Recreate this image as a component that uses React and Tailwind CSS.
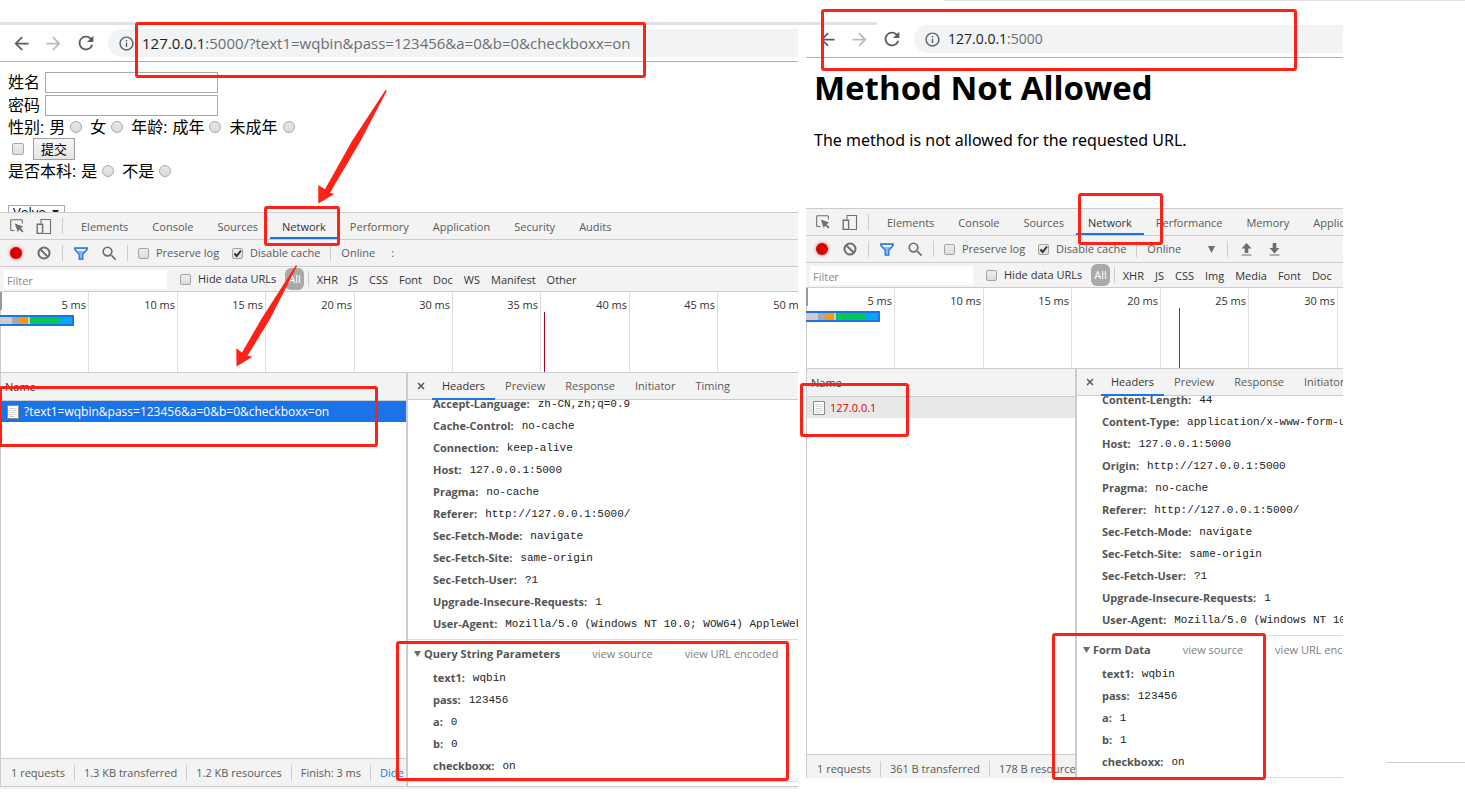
import { MdArrowBack, MdArrowForward, MdRefresh, MdInfoOutline, MdSearch } from "react-icons/md";

const LEFT = {
  host: "127.0.0.1",
  path: ":5000/?text1=wqbin&pass=123456&a=0&b=0&checkboxx=on",
  tabs: ["Elements", "Console", "Sources", "Network", "Performory", "Application", "Security", "Audits"],
  types: ["XHR", "JS", "CSS", "Font", "Doc", "WS", "Manifest", "Other"],
  ticks: [
    ["5 ms", "w-[89px]"],
    ["10 ms", "w-[89px]"],
    ["15 ms", "w-[88px]"],
    ["20 ms", "w-[89px]"],
    ["30 ms", "w-[98px]"],
    ["35 ms", "w-[88px]"],
    ["40 ms", "w-[89px]"],
    ["45 ms", "w-[88px]"],
    ["50 ms", "w-[89px]"],
  ],
  marker: "left-[544px] bg-[#b00020]",
  listWidth: "w-[408px]",
  request: "?text1=wqbin&pass=123456&a=0&b=0&checkboxx=on",
  detailTabs: ["Headers", "Preview", "Response", "Initiator", "Timing"],
  headers: [
    ["Accept-Language", "zh-CN,zh;q=0.9"],
    ["Cache-Control", "no-cache"],
    ["Connection", "keep-alive"],
    ["Host", "127.0.0.1:5000"],
    ["Pragma", "no-cache"],
    ["Referer", "http://127.0.0.1:5000/"],
    ["Sec-Fetch-Mode", "navigate"],
    ["Sec-Fetch-Site", "same-origin"],
    ["Sec-Fetch-User", "?1"],
    ["Upgrade-Insecure-Requests", "1"],
    ["User-Agent", "Mozilla/5.0 (Windows NT 10.0; WOW64) AppleWebKit/537.36"],
  ],
  section: "Query String Parameters",
  params: [
    ["text1", "wqbin"],
    ["pass", "123456"],
    ["a", "0"],
    ["b", "0"],
    ["checkboxx", "on"],
  ],
  status: ["1 requests", "1.3 KB transferred", "1.2 KB resources", "Finish: 3 ms"],
};

const RIGHT = {
  host: "127.0.0.1",
  path: ":5000",
  tabs: ["Elements", "Console", "Sources", "Network", "Performance", "Memory", "Application"],
  types: ["XHR", "JS", "CSS", "Img", "Media", "Font", "Doc"],
  ticks: [
    ["5 ms", "w-[89px]"],
    ["10 ms", "w-[89px]"],
    ["15 ms", "w-[88px]"],
    ["20 ms", "w-[89px]"],
    ["25 ms", "w-[88px]"],
    ["30 ms", "w-[89px]"],
  ],
  marker: "left-[373px] bg-[#0b5cad]",
  listWidth: "w-[271px]",
  request: "127.0.0.1",
  failed: true,
  detailTabs: ["Headers", "Preview", "Response", "Initiator"],
  headers: [
    ["Content-Length", "44"],
    ["Content-Type", "application/x-www-form-urlencoded"],
    ["Host", "127.0.0.1:5000"],
    ["Origin", "http://127.0.0.1:5000"],
    ["Pragma", "no-cache"],
    ["Referer", "http://127.0.0.1:5000/"],
    ["Sec-Fetch-Mode", "navigate"],
    ["Sec-Fetch-Site", "same-origin"],
    ["Sec-Fetch-User", "?1"],
    ["Upgrade-Insecure-Requests", "1"],
    ["User-Agent", "Mozilla/5.0 (Windows NT 10.0; WOW64)"],
  ],
  section: "Form Data",
  params: [
    ["text1", "wqbin"],
    ["pass", "123456"],
    ["a", "1"],
    ["b", "1"],
    ["checkboxx", "on"],
  ],
  status: ["1 requests", "361 B transferred", "178 B resources"],
};

const HIGHLIGHTS = [
  "left-[135px] top-[22px] w-[511px] h-[56px]",
  "left-[821px] top-[9px] w-[476px] h-[62px]",
  "left-[264px] top-[206px] w-[76px] h-[40px]",
  "left-[1078px] top-[193px] w-[85px] h-[52px]",
  "left-[-1px] top-[386px] w-[379px] h-[61px]",
  "left-[800px] top-[383px] w-[109px] h-[54px]",
  "left-[396px] top-[641px] w-[393px] h-[140px]",
  "left-[1052px] top-[633px] w-[214px] h-[147px]",
];

const Separator = ({ className = "" }) => <div className={`h-4 w-px shrink-0 bg-[#ccc] ${className}`} />;

const Tick = ({ id, label, checked, className = "" }) => (
  <span className={`flex shrink-0 items-center gap-[7px] ${className}`}>
    <span className="relative flex">
      <input
        id={id}
        type="checkbox"
        defaultChecked={checked}
        className="size-[11px] appearance-none rounded-[2px] border border-[#a3a3a3] bg-linear-to-b from-[#eee] to-[#dcdcdc]"
      />
      {checked && (
        <svg viewBox="0 0 11 11" className="pointer-events-none absolute inset-0 size-[11px]">
          <path d="M2.5 5.5 4.7 8 9 2.5" fill="none" stroke="#333" strokeWidth="2" />
        </svg>
      )}
    </span>
    <label htmlFor={id}>{label}</label>
  </span>
);

const AddressBar = ({ host, path, textSize }) => (
  <div className="flex h-[37px] items-center border-b border-[#b0b0b0] pl-[11px] text-[#5a5d61]">
    <button aria-label="Back" className="w-8"><MdArrowBack size={21} /></button>
    <button aria-label="Forward" className="w-8 text-[#b9babc]"><MdArrowForward size={21} /></button>
    <button aria-label="Reload" className="w-[33px]"><MdRefresh size={22} /></button>
    <div className={`flex h-7 min-w-0 flex-1 items-center gap-[7px] rounded-l-full bg-[#f1f3f4] pl-[10px] ${textSize}`}>
      <MdInfoOutline size={17} className="shrink-0" />
      <span className="whitespace-nowrap text-[#6b6e72]">
        <span className="text-[#202124]">{host}</span>
        {path}
      </span>
    </div>
  </div>
);

const InspectIcon = () => (
  <svg viewBox="0 0 14 14" className="size-[14px] shrink-0" fill="none">
    <path d="M4.5 11.5h-3a.8.8 0 0 1-.8-.8V1.500c0-.5.3-.8.8-.8h10c.5 0 .8.3.8.8v3" stroke="#6e6e6e" strokeWidth="1.1" />
    <path d="M4.8 4.500 13.200 7.600 10.600 9.200 13.600 12.200 12.200 13.600 9.200 10.600 7.800 13.200z" fill="#6e6e6e" />
  </svg>
);

const DeviceIcon = () => (
  <svg viewBox="0 0 16 17" className="h-[17px] w-4 shrink-0" fill="none" stroke="#6e6e6e">
    <path d="M5 5.500V1.500h9.500v14H7.500" strokeWidth="1.1" />
    <path d="M1.200 6.200h5.400v9.200H1.200z" strokeWidth="1.4" />
  </svg>
);

const ClearIcon = () => (
  <svg viewBox="0 0 14 14" className="mx-px size-[14px] shrink-0" fill="none" stroke="#6e6e6e" strokeWidth="2">
    <circle cx="7" cy="7" r="5.5" />
    <path d="M3.200 3.200l7.600 7.600" />
  </svg>
);

const FunnelIcon = () => (
  <svg viewBox="0 0 14 13" className="h-[13px] w-[14px] shrink-0">
    <path d="M.8 1h12.4v1.500L8.800 7.200v5H5.200v-5L.8 2.500z" fill="#8ab4f8" stroke="#1a73e8" strokeWidth="1.3" />
    <path d="M2 2h10L10.500 4h-7z" fill="#f3f3f3" />
  </svg>
);

const LoadIcon = ({ down }) => (
  <svg viewBox="0 0 11 13" className="h-[13px] w-[11px] shrink-0" fill="#6e6e6e">
    {down ? <path d="M3.700 0h3.600v5h3.200l-5 5.500-5-5.500h3.200z" /> : <path d="M5.500 0l5 5.500H7.300v4.500H3.700V5.500H.5z" />}
    <path d="M.5 11.500h10v1H.5z" />
  </svg>
);

const FileIcon = () => (
  <svg viewBox="0 0 12 14" className="h-[14px] w-3 shrink-0">
    <path d="M.5.5h11v13H.5z" fill="#fff" stroke="#8a8a8a" />
    <path d="M2.500 3.500h4m1 0h2M2.500 5.500h2m1 0h4M2.500 7.500h5m1 0h1M2.500 9.500h3m1 0h3M2.500 11.500h5" stroke="#ccc" />
  </svg>
);

const Timeline = ({ ticks, marker }) => (
  <div className="relative flex h-20 overflow-hidden bg-white text-[#333]">
    {ticks.map(([label, width]) => (
      <div key={label} className={`shrink-0 border-r border-[#e0e0e0] pr-[2px] pt-[5px] text-right ${width}`}>
        {label}
      </div>
    ))}
    <div className="absolute left-0 top-0 h-[18px] w-[2px] bg-[#999]" />
    <div className="absolute left-0 top-[18px] h-[62px] w-px bg-[#ccc]" />
    <div className="absolute left-0 top-[23px] flex h-[11px] w-[74px] border-y-2 border-r-2 border-[#1a73e8]">
      <span className="w-[12px] bg-[#ccc]" />
      <span className="w-[7px] bg-[#a8a8a8]" />
      <span className="w-[9px] bg-[#ff9800]" />
      <span className="w-[2px] bg-[#ccc]" />
      <span className="w-[29px] bg-[#00c853]" />
      <span className="flex-1 bg-[#03a9f4]" />
    </div>
    <div className={`absolute top-5 h-[60px] w-px ${marker}`} />
  </div>
);

const Pairs = ({ rows }) => (
  <dl className="pl-[25px]">
    {rows.map(([name, value]) => (
      <div key={name} className="flex h-[22px] items-center gap-2 whitespace-nowrap">
        <dt className="font-bold text-[#545454]">{name}:</dt>
        <dd className="font-['Liberation_Mono',monospace] text-[#222]">{value}</dd>
      </div>
    ))}
  </dl>
);

const DevTools = ({ data, id, toolbarEnd, statusEnd, statusHeight }) => (
  <section className="border-t border-[#ccc] bg-[#f3f3f3] text-[11px] leading-4 text-[#5a5a5a]">
    <div className="flex h-[27px] items-center overflow-hidden border-b border-[#ccc] pl-[10px]">
      <InspectIcon />
      <span className="ml-[12px] flex"><DeviceIcon /></span>
      <Separator className="ml-[10px] mr-[6px]" />
      {data.tabs.map((tab) => (
        <button
          key={tab}
          className={`h-[26px] shrink-0 px-3 ${tab === "Network" ? "border-b-2 border-[#1a73e8] pt-1 text-[#333]" : "pt-[2px]"}`}
        >
          {tab}
        </button>
      ))}
    </div>

    <div className="flex h-[27px] items-center overflow-hidden border-b border-[#ccc] pl-[10px]">
      <button aria-label="Record" className="size-3 shrink-0 rounded-full bg-[#d80000] shadow-[0_0_3px_1px_#f5a3a3]" />
      <button aria-label="Clear" className="ml-[14px]"><ClearIcon /></button>
      <Separator className="ml-[10px] mr-[11px]" />
      <button aria-label="Filter"><FunnelIcon /></button>
      <button aria-label="Search" className="ml-[12px] text-[#6e6e6e]"><MdSearch size={19} /></button>
      <Separator className="ml-[8px] mr-[10px]" />
      <Tick id={`${id}-log`} label="Preserve log" />
      <Tick id={`${id}-cache`} label="Disable cache" checked className="ml-[13px]" />
      <Separator className="mx-[10px]" />
      {toolbarEnd}
    </div>

    <div className="flex h-[25px] items-center overflow-hidden border-b border-[#ccc] pl-1 text-[#333]">
      <input
        aria-label="Filter requests"
        placeholder="Filter"
        className="h-[19px] w-[163px] shrink-0 bg-white px-[3px] pt-[2px] placeholder:text-[#888]"
      />
      <Tick id={`${id}-hide`} label="Hide data URLs" className="ml-[13px]" />
      <button className="ml-[9px] h-[22px] shrink-0 rounded-[6px] bg-[#a9a9a9] px-[3px] text-white">All</button>
      <Separator className="ml-1 mr-2" />
      <div className="flex gap-[11px] pt-[2px]">
        {data.types.map((type) => (
          <button key={type}>{type}</button>
        ))}
      </div>
    </div>

    <Timeline ticks={data.ticks} marker={data.marker} />

    <div className="flex border-t border-[#ccc]">
      <div className={`flex shrink-0 flex-col border-l border-r-2 border-[#ccc] ${data.listWidth}`}>
        <div className="flex h-7 items-center border-b border-[#ccc] pl-1 text-[#333]">Name</div>
        <div
          className={`flex h-[21px] items-center gap-[5px] whitespace-nowrap pl-[6px] ${
            data.failed ? "bg-[#e8e8e8] text-[#e00000]" : "bg-[#1a73e8] text-xs text-white"
          }`}
        >
          <FileIcon />
          {data.request}
        </div>
        <div className="flex-1 bg-white" />
        <div className={`flex items-start overflow-hidden whitespace-nowrap border-t border-[#ccc] pl-[10px] pt-[6px] ${statusHeight}`}>
          {data.status.map((text, i) => (
            <span key={text} className="flex shrink-0">
              {i > 0 && <Separator className="mx-[9px]" />}
              {text}
            </span>
          ))}
          {statusEnd}
        </div>
      </div>

      <div className="min-w-0 flex-1 overflow-hidden">
        <div className="flex h-[27px] items-center border-b border-[#ccc] pl-2">
          <button aria-label="Close" className="mr-[6px] w-[10px] shrink-0">
            <svg viewBox="0 0 8 8" className="mx-auto size-2">
              <path d="M1 1l6 6M7 1 1 7" stroke="#555" strokeWidth="1.5" />
            </svg>
          </button>
          {data.detailTabs.map((tab, i) => (
            <button
              key={tab}
              className={`h-[27px] shrink-0 px-[10px] ${i === 0 ? "border-b-2 border-[#1a73e8] pt-[2px] text-[#333]" : ""}`}
            >
              {tab}
            </button>
          ))}
        </div>
        <div className="overflow-hidden bg-white">
          <div className="-mt-[7px] border-b border-[#ddd] pb-1">
            <Pairs rows={data.headers} />
          </div>
          <div className="border-b border-[#ddd] pb-1 pt-1">
            <div className="mb-[3px] flex h-5 items-center whitespace-nowrap pl-[6px]">
              <svg viewBox="0 0 7 6" className="mr-[3px] h-[6px] w-[7px] shrink-0">
                <path d="M0 0h7L3.500 6z" fill="#6e6e6e" />
              </svg>
              <h3 className="font-bold text-[#545454]">{data.section}</h3>
              <button className="ml-8 shrink-0 text-[#808080]">view source</button>
              <button className="ml-8 shrink-0 text-[#808080]">view URL encoded</button>
            </div>
            <Pairs rows={data.params} />
          </div>
        </div>
        {statusEnd && <div className="h-1 bg-white" />}
      </div>
    </div>
  </section>
);

const Radio = ({ name, label }) => (
  <label className="mr-2 flex items-center gap-[5px]">
    {label}
    <input
      type="radio"
      name={name}
      className="size-3 appearance-none rounded-full border border-[#a9a9a9] bg-linear-to-b from-[#e8e8e8] to-[#dadada]"
    />
  </label>
);

const SurveyForm = () => (
  <form className="h-[150px] overflow-hidden pl-2 pt-2 text-base leading-[22px] text-black">
    <label className="flex h-[23px] items-center gap-[5px]">
      姓名
      <input className="h-[21px] w-[173px] self-end border border-[#a9a9a9] bg-white" />
    </label>
    <label className="flex h-[23px] items-center gap-[5px]">
      密码
      <input type="password" className="h-[21px] w-[173px] self-end border border-[#a9a9a9] bg-white" />
    </label>
    <div className="flex h-[22px] items-center">
      <span className="mr-[5px]">性别:</span>
      <Radio name="sex" label="男" />
      <Radio name="sex" label="女" />
      <span className="mr-[5px]">年龄:</span>
      <Radio name="age" label="成年" />
      <Radio name="age" label="未成年" />
    </div>
    <div className="flex h-[22px] items-center pl-1">
      <input
        type="checkbox"
        aria-label="checkboxx"
        className="size-3 appearance-none rounded-[2px] border border-[#a9a9a9] bg-linear-to-b from-[#eee] to-[#dcdcdc]"
      />
      <button type="button" className="ml-[9px] h-[22px] w-[42px] border border-[#a0a0a0] bg-linear-to-b from-[#f6f6f6] to-[#e4e4e4] text-[13px] leading-5">
        提交
      </button>
    </div>
    <div className="flex h-[22px] items-center">
      <span className="mr-[5px]">是否本科:</span>
      <Radio name="degree" label="是" />
      <Radio name="degree" label="不是" />
    </div>
    <div className="relative mt-[23px] flex w-[57px]">
      <select aria-label="car" className="h-[14px] w-full appearance-none border border-[#a9a9a9] bg-white pl-1 text-[13px] leading-3">
        <option>Volvo</option>
      </select>
      <svg viewBox="0 0 7 5" className="pointer-events-none absolute right-[6px] top-[5px] h-[5px] w-[7px]">
        <path d="M0 0h7L3.500 5z" fill="#222" />
      </svg>
    </div>
  </form>
);

export default function App() {
  return (
    <main className="relative flex items-start overflow-hidden bg-white pb-[7px] font-['Open_Sans','Noto_Sans_CJK_SC',sans-serif]">
      <div className="absolute left-0 top-[22px] h-[3px] w-[877px] bg-[#dee1e6]" />
      <div className="absolute left-[944px] right-0 top-0 h-px bg-[#dee1e6]" />
      <div className="absolute left-[1387px] right-0 top-[762px] h-px bg-[#ccc]" />

      <div className="min-w-0 flex-[798] pt-[25px]">
        <AddressBar host={LEFT.host} path={LEFT.path} textSize="text-[15px]" />
        <SurveyForm />
        <DevTools
          id="get"
          data={LEFT}
          statusHeight="h-7"
          toolbarEnd={
            <>
              <span>Online</span>
              <span className="ml-4">:</span>
            </>
          }
          statusEnd={
            <>
              <Separator className="mx-[9px]" />
              <span className="text-[#1a73e8]">Dide</span>
            </>
          }
        />
        <div className="h-[3px] border-t border-[#ccc] bg-[#f3f3f3]" />
      </div>

      <div className="ml-2 min-w-0 flex-[537] pt-[21px]">
        <AddressBar host={RIGHT.host} path={RIGHT.path} textSize="text-sm" />
        <div className="h-[150px] whitespace-nowrap pl-2 pt-[10px] text-black">
          <h1 className="text-[33px] font-bold leading-10">Method Not Allowed</h1>
          <p className="mt-5 font-['Noto_Sans',sans-serif] text-base">The method is not allowed for the requested URL.</p>
        </div>
        <DevTools
          id="post"
          data={RIGHT}
          statusHeight="h-6"
          toolbarEnd={
            <>
              <span>Online</span>
              <svg viewBox="0 0 7 7" className="ml-[27px] size-[7px] shrink-0">
                <path d="M0 0h7L3.500 7z" fill="#6e6e6e" />
              </svg>
              <Separator className="ml-3 mr-[13px]" />
              <button aria-label="Import"><LoadIcon /></button>
              <button aria-label="Export" className="ml-[17px]"><LoadIcon down /></button>
            </>
          }
        />
      </div>

      <div className="flex-[122]" />

      {HIGHLIGHTS.map((box) => (
        <div key={box} className={`pointer-events-none absolute rounded-[3px] border-3 border-[#ff2116] ${box}`} />
      ))}
      <svg viewBox="0 0 400 400" className="pointer-events-none absolute left-0 top-0 size-[400px]" fill="#ff2116">
        <path d="M385.5 90 387 90.5 360 142 330 192.700 334.300 194 318.300 203.500 318.300 185 325 189.300 352 141z" />
        <path d="M296 265 297 266 270 319 247.500 355.800 252.500 356.700 236.500 366.500 236.300 348.300 242 352.500 262 318z" />
      </svg>
    </main>
  );
}
